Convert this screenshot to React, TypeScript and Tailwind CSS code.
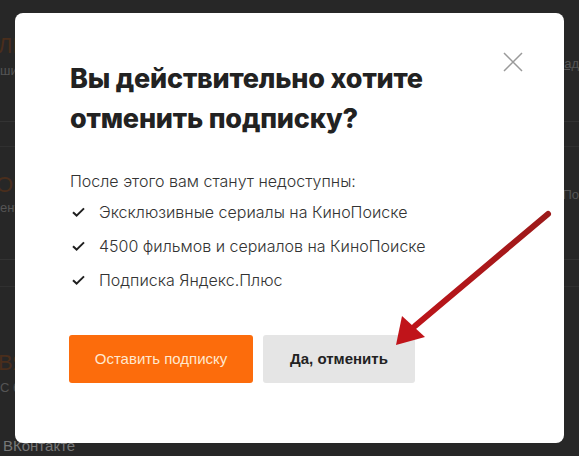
import React from 'react';

const features = [
  'Эксклюзивные сериалы на КиноПоиске',
  '4500 фильмов и сериалов на КиноПоиске',
  'Подписка Яндекс.Плюс',
];

const CheckIcon = () => (
  <svg width="13" height="10" viewBox="0 0 13 10" fill="none" className="shrink-0">
    <path d="M1 5.2 L4.6 8.6 L12 1.4" stroke="#1f1f1f" strokeWidth="2" />
  </svg>
);

const BackgroundPage = () => (
  <div className="absolute inset-0 flex flex-col font-['Liberation_Sans',sans-serif] text-[#6b6b6b]">
    <div className="h-[122px] border-b border-[#333] flex justify-between">
      <div className="pt-[34px] flex flex-col gap-[6px]">
        <span className="text-[22px] leading-[24px] text-[#4a2e1c] -ml-[2px]">ЛИ</span>
        <span className="text-[13px] leading-[14px] text-[#555]">ши</span>
      </div>
      <span className="pt-[54px] text-[13px] text-[#555] underline">ад</span>
    </div>
    <div className="h-[25px] border-b border-[#303030]" />
    <div className="h-[113px] border-b border-[#333] flex justify-between">
      <div className="pt-[26px] flex flex-col gap-[4px]">
        <span className="text-[22px] leading-[24px] text-[#4a2e1c] -ml-[4px]">ОП</span>
        <span className="text-[13px] leading-[14px] text-[#555]">ент</span>
      </div>
      <span className="pt-[38px] text-[13px] text-[#555]">По</span>
    </div>
    <div className="h-[27px] border-b border-[#303030]" />
    <div className="flex-1 flex flex-col">
      <div className="pt-[64px] flex flex-col gap-[6px]">
        <span className="text-[22px] leading-[24px] text-[#4a2e1c] -ml-[2px]">ВЯ</span>
        <span className="text-[13px] leading-[14px] text-[#555]">С ба</span>
      </div>
      <span className="mt-auto mb-[2px] text-[15px] leading-[16px] text-[#777] pl-[3px]">ВКонтакте</span>
    </div>
  </div>
);

const Arrow = () => (
  <svg
    className="absolute left-0 top-0 pointer-events-none"
    width="579"
    height="456"
    viewBox="0 0 579 456"
  >
    <defs>
      <linearGradient id="arrowGrad" x1="548" y1="214" x2="400" y2="340" gradientUnits="userSpaceOnUse">
        <stop offset="0" stopColor="#9c1a1a" />
        <stop offset="1" stopColor="#c0141a" />
      </linearGradient>
    </defs>
    <line x1="548" y1="214" x2="415" y2="326" stroke="url(#arrowGrad)" strokeWidth="6" strokeLinecap="round" />
    <polygon points="396,345 402,316 425,337" fill="#c0141a" />
  </svg>
);

export default function App() {
  return (
    <div className="relative w-[579px] h-[456px] bg-[#272727] overflow-hidden">
      <BackgroundPage />
      <div className="absolute left-[15px] top-[13px] w-[549px] h-[430px] bg-white rounded-[8px] pl-[55px] pt-[46px] pr-[30px]">
        <button className="absolute right-[40px] top-[38px] w-[22px] h-[22px] flex items-center justify-center">
          <svg width="20" height="20" viewBox="0 0 20 20">
            <path d="M1 1 L19 19 M19 1 L1 19" stroke="#9a9a9a" strokeWidth="1.5" />
          </svg>
        </button>
        <h2 className="font-['Inter',sans-serif] font-extrabold text-[27px] leading-[40px] text-[#222] tracking-[-0.2px]">
          Вы действительно хотите
          <br />
          отменить подписку?
        </h2>
        <p className="mt-[31px] font-['Inter',sans-serif] font-light text-[16px] leading-[22px] text-[#333]">
          После этого вам станут недоступны:
        </p>
        <ul className="mt-[9px] flex flex-col gap-[12px]">
          {features.map((f) => (
            <li key={f} className="flex items-center gap-[14px] pl-[2px]">
              <CheckIcon />
              <span className="font-['Inter',sans-serif] font-light text-[16px] leading-[22px] text-[#333]">{f}</span>
            </li>
          ))}
        </ul>
        <div className="mt-[44px] flex gap-[10px] -ml-[1px]">
          <button className="w-[184px] h-[48px] rounded-[3px] bg-[#fc6c0c] text-[#ffe8cf] font-['Liberation_Sans',sans-serif] text-[15px]">
            Оставить подписку
          </button>
          <button className="w-[152px] h-[48px] rounded-[3px] bg-[#e5e5e5] text-[#222] font-['Liberation_Sans',sans-serif] font-bold text-[15px]">
            Да, отменить
          </button>
        </div>
      </div>
      <Arrow />
    </div>
  );
}
